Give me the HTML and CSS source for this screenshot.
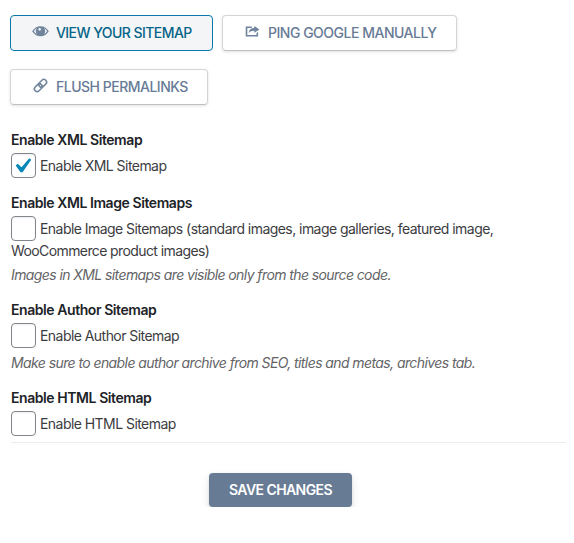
FILE: index.html
```html
<!DOCTYPE html>
<html lang="en">
<head>
<meta charset="utf-8">
<title>Sitemaps</title>
<link rel="stylesheet" href="styles.css">
</head>
<body>
<div class="actions">
  <a class="btn btn-view"><svg class="icon" viewBox="0 0 20 20"><path fill-rule="evenodd" d="M10 3.700C5.900 3.700 2.500 6 .2 9.700 2.500 13.400 5.900 15.700 10 15.700s7.500-2.300 9.800-6C17.500 6 14.100 3.700 10 3.700zM6.100 5.900a5 5 0 0 0-.2 7.200C4.500 12.300 3.200 11.200 2.200 9.700c1-1.700 2.300-3 3.900-3.800zm7.800 0c1.600.8 2.900 2.100 3.900 3.800-1 1.500-2.300 2.600-3.700 3.400a5 5 0 0 0-.2-7.200zM9 6a1.500 1.500 0 1 1-1.400 2A1.500 1.500 0 0 1 9 6z"/></svg><span>VIEW YOUR SITEMAP</span></a>
  <a class="btn btn-ping"><svg class="icon" viewBox="0 0 20 20"><path d="M12.200 3.500 18.200 7.500l-6 4V9.200C9 9.200 7 10 5.400 12.100 5.700 8 8.300 5.900 12.200 5.700zM2 4h7.200v1.800H3.900v8.300h10.800v-2.300l1.900-1.300V16H2z"/></svg><span>PING GOOGLE MANUALLY</span></a>
  <a class="btn btn-flush"><svg class="icon link" viewBox="0 0 20 20"><g transform="rotate(-45 10 10)"><rect x="1.200" y="6.800" width="10.300" height="6.400" rx="3.200"/><rect x="8.500" y="6.800" width="10.300" height="6.400" rx="3.200"/></g></svg><span>FLUSH PERMALINKS</span></a>
</div>
<form>
  <section class="field">
    <h2>Enable XML Sitemap</h2>
    <label><span class="box"><svg viewBox="0 0 20 20"><path d="M14.830 4.890l1.340.94-5.810 8.380H9.020L5.780 9.670l1.340-1.250 2.570 2.400z"/></svg></span><span>Enable XML Sitemap</span></label>
  </section>
  <section class="field">
    <h2>Enable XML Image Sitemaps</h2>
    <label><span class="box"></span><span>Enable Image Sitemaps (standard images, image galleries, featured image,</span></label>
    <div class="more">WooCommerce product images)</div>
    <p>Images in XML sitemaps are visible only from the source code.</p>
  </section>
  <section class="field">
    <h2>Enable Author Sitemap</h2>
    <label><span class="box"></span><span>Enable Author Sitemap</span></label>
    <p class="hint-author">Make sure to enable author archive from SEO, titles and metas, archives tab.</p>
  </section>
  <section class="field">
    <h2>Enable HTML Sitemap</h2>
    <label><span class="box"></span><span>Enable HTML Sitemap</span></label>
  </section>
  <hr>
  <button class="save" type="button">SAVE CHANGES</button>
</form>
</body>
</html>
```
FILE: styles.css
```css
* { box-sizing: border-box; }
body {
  margin: 0;
  padding: 15px 8px 0 11px;
  background: #fff;
  color: #3c3c3f;
  font: 14px/20px Inter, "Liberation Sans", sans-serif;
  letter-spacing: -0.55px;
  white-space: nowrap;
}
.actions { display: flex; flex-wrap: wrap; gap: 18px 9px; margin: 0 0 25px -1px; }
.btn {
  display: flex;
  align-items: center;
  height: 36px;
  padding-left: 20px;
  border: 1px solid #d4d5d8;
  border-bottom-color: #bfc1c5;
  border-radius: 4px;
  box-shadow: 0 1px 3px rgba(0, 0, 0, .12);
  color: #677b96;
  font-weight: 500;
}
.btn-view {
  width: 203px;
  background: #f3f5f7;
  border-color: #0878ad;
  box-shadow: none;
  color: #056488;
  letter-spacing: -0.56px;
}
.btn-ping { width: 235px; letter-spacing: -0.49px; }
.btn-flush { width: 198px; letter-spacing: -0.5px; }
.icon { width: 17px; height: 17px; margin: -4px 7px 0 1px; fill: #71849d; flex: none; }
.link { fill: none; stroke: #71849d; stroke-width: 1.8; }
.field { margin-bottom: 15px; }
h2 {
  margin: 0 0 3px;
  font-size: 14px;
  line-height: 20px;
  font-weight: 600;
  letter-spacing: -0.43px;
  color: #1d2327;
}
label { display: flex; align-items: center; gap: 4px; height: 25px; }
.box {
  width: 25px;
  height: 25px;
  flex: none;
  border: 1px solid #81858c;
  border-radius: 4px;
  background: #fff;
  box-shadow: inset 0 1px 2px rgba(0, 0, 0, .07);
}
.box svg { display: block; width: 30px; height: 30px; margin: -3px 0 0 -5px; fill: #0787b8; }
.more { letter-spacing: -0.6px; }
p { margin: 4px 0 0; font-style: italic; letter-spacing: -0.59px; color: #646467; }
.hint-author { margin-top: 5px; }
hr { width: 555px; margin: -9px 0 30px; border: 0; border-top: 1px solid #ececee; }
.save {
  display: block;
  width: 143px;
  height: 34px;
  margin-left: 198px;
  padding: 0;
  border: 0;
  border-radius: 4px;
  background: #677b95;
  box-shadow: 0 4px 8px rgba(50, 50, 93, .13), 0 1px 3px rgba(0, 0, 0, .09);
  color: #fff;
  font: 600 14px/34px Inter, "Liberation Sans", sans-serif;
  letter-spacing: -0.57px;
}
```
